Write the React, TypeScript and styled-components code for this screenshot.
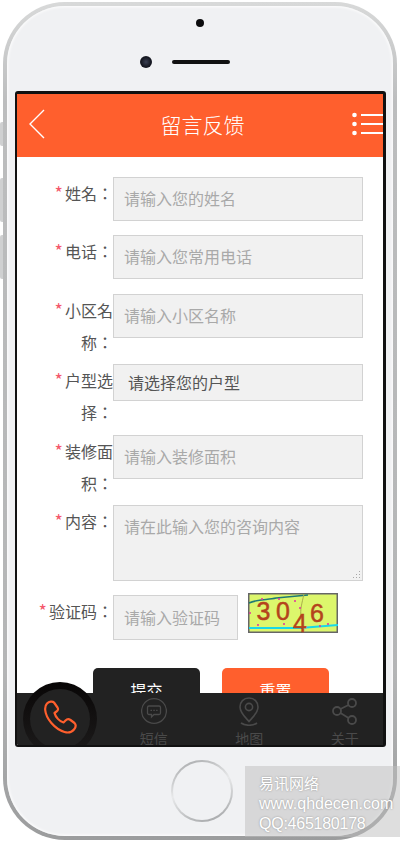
import React from 'react';
import styled, { createGlobalStyle } from 'styled-components';

const FONT = '"Noto Sans CJK SC", "Noto Sans", sans-serif';

const GlobalStyle = createGlobalStyle`
  html, body {
    margin: 0;
    padding: 0;
    background: #fff;
    font-family: ${FONT};
  }
  * {
    box-sizing: border-box;
  }
`;

const Page = styled.div`
  width: 400px;
  height: 844px;
  padding: 2px 3px 4px;
  overflow: hidden;
  position: relative;
`;

const Phone = styled.div`
  position: relative;
  height: 838px;
  border: 4px solid transparent;
  border-radius: 62px;
  background:
    linear-gradient(#f0f1f3, #f0f1f3) padding-box,
    linear-gradient(#d8d9d9, #bcbdbe 12%, #b4b5b6 80%, #9b9c9d) border-box;
  box-shadow: inset 0 0 3px 1px rgba(255, 255, 255, 0.9);
`;

const SideKey = styled.div<{ $top: number; $height: number }>`
  position: absolute;
  left: -7px;
  top: ${p => p.$top}px;
  width: 3px;
  height: ${p => p.$height}px;
  background: #cfd0d1;
  border-radius: 2px 0 0 2px;
`;

const TopBezel = styled.div`
  height: 85px;
  display: flex;
  flex-direction: column;
  align-items: center;
  padding-top: 13px;
`;

const FrontDot = styled.div`
  width: 8px;
  height: 8px;
  border-radius: 50%;
  background: #0b0b0d;
`;

const EarRow = styled.div`
  display: flex;
  align-items: center;
  gap: 20px;
  margin-top: 29px;
  margin-right: 30px;
`;

const Camera = styled.div`
  width: 12px;
  height: 12px;
  border-radius: 50%;
  background: radial-gradient(circle at 50% 50%, #3a3f52 0, #14161f 60%, #2a2c34 100%);
`;

const Speaker = styled.div`
  width: 58px;
  height: 4px;
  border-radius: 2px;
  background: #111;
`;

const Screen = styled.div`
  position: relative;
  width: 371px;
  height: 656px;
  margin-left: 8px;
  background: #fff;
  border-style: solid;
  border-color: #111;
  border-width: 3px 3px 2px 2px;
  border-radius: 3px;
  overflow: hidden;
`;

const Header = styled.header`
  height: 63px;
  background: #ff5f2d;
  display: flex;
  align-items: center;
  justify-content: space-between;
  padding: 0 0 4px 12px;
`;

const Title = styled.h1`
  margin: 0 0 0 8px;
  font-size: 21px;
  font-weight: 300;
  line-height: 30px;
  color: #fff;
`;

const FormBox = styled.form`
  padding-top: 20px;
`;

const Row = styled.div<{ $gap?: number }>`
  display: flex;
  align-items: flex-start;
  margin-bottom: ${p => p.$gap ?? 14}px;
  padding-left: 16px;
`;

/* the TC face centres the full-width colon in its cell */
const Label = styled.label`
  flex: none;
  width: 80px;
  font-family: "Noto Sans CJK TC", sans-serif;
  font-size: 16px;
  line-height: 32px;
  color: #555;
  text-align: right;
`;

const Star = styled.span`
  color: #f4566a;
  font-size: 18px;
  line-height: 16px;
  margin-right: 2px;
`;

const Field = styled.input<{ $short?: boolean }>`
  display: block;
  width: ${p => (p.$short ? 125 : 250)}px;
  height: ${p => (p.$short ? 45 : 44)}px;
  padding: 0 10px 2px;
  background: #f1f1f1;
  border: 1px solid #d2d2d2;
  border-radius: 0;
  outline: none;
  font-family: ${FONT};
  font-size: 16px;
  color: #555;
  &::placeholder {
    color: #a9a9a9;
    opacity: 1;
  }
`;

const Choice = styled.select`
  display: block;
  width: 250px;
  height: 37px;
  padding: 0 14px 2px;
  appearance: none;
  background: #f1f1f1;
  border: 1px solid #d2d2d2;
  border-radius: 0;
  outline: none;
  font-family: ${FONT};
  font-size: 16px;
  color: #555;
`;

const gripDot = 'linear-gradient(#a8a8a8, #a8a8a8)';

const Message = styled.textarea`
  display: block;
  width: 250px;
  height: 76px;
  padding: 8px 10px;
  resize: none;
  border: 1px solid #d2d2d2;
  border-radius: 0;
  outline: none;
  background-color: #f1f1f1;
  background-repeat: no-repeat;
  background-size: 1px 1px;
  background-image: ${gripDot}, ${gripDot}, ${gripDot}, ${gripDot}, ${gripDot}, ${gripDot};
  background-position:
    calc(100% - 2px) calc(100% - 2px),
    calc(100% - 5px) calc(100% - 2px),
    calc(100% - 8px) calc(100% - 2px),
    calc(100% - 2px) calc(100% - 5px),
    calc(100% - 5px) calc(100% - 5px),
    calc(100% - 2px) calc(100% - 8px);
  font-family: ${FONT};
  font-size: 16px;
  line-height: 24px;
  color: #555;
  &::placeholder {
    color: #a9a9a9;
    opacity: 1;
  }
`;

const Captcha = styled.svg`
  flex: none;
  display: block;
  margin: -2px 0 0 10px;
`;

const Actions = styled.div`
  display: flex;
  gap: 22px;
  margin-top: 28px;
  padding-left: 76px;
`;

const Action = styled.button<{ $tone: string }>`
  width: 107px;
  height: 44px;
  border: 0;
  border-radius: 5px;
  background: ${p => p.$tone};
  font-family: ${FONT};
  font-size: 16px;
  color: #fff;
`;

const TabBar = styled.nav`
  position: absolute;
  left: 0;
  right: 0;
  bottom: 0;
  height: 52px;
  background: #222;
  display: grid;
  grid-template-columns: repeat(3, 95.5px);
  padding-left: 89px;
`;

const CallRing = styled.div`
  position: absolute;
  left: 6px;
  top: -11px;
  width: 74px;
  height: 74px;
  border-radius: 50%;
  padding: 7px;
  background: linear-gradient(#080606, #131111 50%, #1d1c1c);
`;

const CallFace = styled.div`
  width: 100%;
  height: 100%;
  border-radius: 50%;
  background: #222;
  display: flex;
  justify-content: center;
  padding: 11px 0 0 1px;
  color: #ff5f2d;
`;

const Tab = styled.a`
  display: flex;
  flex-direction: column;
  align-items: center;
  padding-top: 4px;
  color: #4a4a4a;
  font-size: 14px;
  line-height: 20px;
`;

const TabIcon = styled.svg`
  display: block;
  height: 29px;
  margin-bottom: 2px;
`;

const HomeArea = styled.div`
  display: flex;
  justify-content: center;
  padding: 13px 0 0 4px;
`;

const HomeKey = styled.div`
  width: 62px;
  height: 62px;
  border-radius: 50%;
  background: linear-gradient(160deg, #a0a2a4, #e8e9ea 45%, #9c9ea0);
  padding: 2px;
  &::after {
    content: '';
    display: block;
    width: 100%;
    height: 100%;
    border-radius: 50%;
    background: #f0f1f3;
  }
`;

const Watermark = styled.div`
  position: absolute;
  left: 245px;
  top: 766px;
  width: 155px;
  height: 71px;
  padding: 7px 0 0 14px;
  background: rgba(190, 190, 190, 0.5);
  color: #fff;
  font-family: "Liberation Sans", ${FONT};
  font-size: 16px;
  line-height: 20px;
  text-shadow: 0 0 2px #8f8f8f;
  white-space: nowrap;
`;

const WatermarkName = styled.span`
  font-family: ${FONT};
  font-size: 15px;
`;

const WatermarkQQ = styled.span`
  letter-spacing: -0.25px;
`;

const BackIcon = () => (
  <svg width="16" height="30" viewBox="0 0 16 30" fill="none" stroke="#fff" strokeWidth="1.4">
    <path d="M15 1 L1 15 L15 29" />
  </svg>
);

const MenuIcon = () => (
  <svg width="31" height="24" viewBox="0 0 31 24" fill="#fff">
    <circle cx="2.5" cy="3" r="2.3" />
    <circle cx="2.5" cy="12" r="2.3" />
    <circle cx="2.5" cy="21" r="2.3" />
    <rect x="9" y="2" width="22" height="2" />
    <rect x="9" y="11" width="22" height="2" />
    <rect x="9" y="20" width="22" height="2" />
  </svg>
);

const PhoneIcon = () => (
  <svg width="33" height="34" viewBox="0 0 33 34" fill="none" stroke="currentColor" strokeWidth="2.2" strokeLinejoin="round">
    <path d="M3 3.5 C5 1.5 8.5 1 10 2.5 L13.5 7.5 C14.5 9 14 10.5 12.5 11.5 L10.5 13 C11.5 17 15.5 21.5 19.5 22.5 L21.5 20.5 C23 19 25 19 26.5 20 L30.5 23 C32 24.5 32 27 30 29.5 C27.5 32.5 24 33 20.5 32 C10.5 29 2 18.5 1.2 10 C1 7.5 1.5 5 3 3.5 Z" />
  </svg>
);

const CaptchaImage = () => (
  <Captcha width="90" height="40" viewBox="0 0 90 40">
    <rect x="0.75" y="0.75" width="88.5" height="38.5" fill="#dcf66c" stroke="#666" strokeWidth="1.5" />
    <path d="M1 10 C10 6 20 7 28 5 L60 2" stroke="#1f7a74" strokeWidth="1.5" fill="none" />
    <path d="M56 1 C54 10 52 16 53 24" stroke="#a8b04a" strokeWidth="1" fill="none" />
    <path d="M1 35 L52 35 L90 32" stroke="#19d8e8" strokeWidth="1.8" fill="none" />
    <g fontFamily='"Liberation Sans", sans-serif' fontSize="25" fill="#b4431c" stroke="#b4431c" strokeWidth="0.5">
      <text x="8.5" y="27">3</text>
      <text x="28" y="27">0</text>
      <text x="45" y="38.5">4</text>
      <text x="62" y="29">6</text>
    </g>
    <g fill="#e0329e">
      <circle cx="14" cy="6" r="1" />
      <circle cx="31" cy="6" r="1" />
      <circle cx="47" cy="8" r="1" />
      <circle cx="52" cy="15" r="1" />
      <circle cx="10" cy="32" r="1" />
      <circle cx="36" cy="31" r="1" />
      <circle cx="72" cy="33" r="1" />
      <circle cx="80" cy="31" r="1" />
      <circle cx="2" cy="20" r="1" />
    </g>
  </Captcha>
);

const App: React.FC = () => {
  return (
    <Page>
      <GlobalStyle />
      <Phone>
        <SideKey $top={116} $height={24} />
        <SideKey $top={172} $height={44} />
        <SideKey $top={229} $height={44} />
        <TopBezel>
          <FrontDot />
          <EarRow>
            <Camera />
            <Speaker />
          </EarRow>
        </TopBezel>

        <Screen>
          <Header>
            <BackIcon />
            <Title>留言反馈</Title>
            <MenuIcon />
          </Header>

          <FormBox>
            <Row>
              <Label><Star>*</Star>姓名：</Label>
              <Field placeholder="请输入您的姓名" />
            </Row>
            <Row $gap={15}>
              <Label><Star>*</Star>电话：</Label>
              <Field placeholder="请输入您常用电话" />
            </Row>
            <Row $gap={6}>
              <Label><Star>*</Star>小区名称：</Label>
              <Field placeholder="请输入小区名称" />
            </Row>
            <Row $gap={7}>
              <Label><Star>*</Star>户型选择：</Label>
              <Choice defaultValue="">
                <option value="">请选择您的户型</option>
              </Choice>
            </Row>
            <Row $gap={6}>
              <Label><Star>*</Star>装修面积：</Label>
              <Field placeholder="请输入装修面积" />
            </Row>
            <Row>
              <Label><Star>*</Star>内容：</Label>
              <Message placeholder="请在此输入您的咨询内容" />
            </Row>
            <Row $gap={0}>
              <Label><Star>*</Star>验证码：</Label>
              <Field $short placeholder="请输入验证码" />
              <CaptchaImage />
            </Row>
            <Actions>
              <Action type="button" $tone="#222">提交</Action>
              <Action type="button" $tone="#ff5f2d">重置</Action>
            </Actions>
          </FormBox>

          <TabBar>
            <CallRing>
              <CallFace><PhoneIcon /></CallFace>
            </CallRing>
            <Tab>
              <TabIcon width="26" viewBox="0 0 26 29" fill="none" stroke="currentColor" strokeWidth="1.3">
                <circle cx="13" cy="14" r="12.4" />
                <path d="M8 9 H18 A1.5 1.5 0 0 1 19.5 10.5 V16 A1.5 1.5 0 0 1 18 17.5 H13 L10.5 20 V17.5 H8 A1.5 1.5 0 0 1 6.5 16 V10.5 A1.5 1.5 0 0 1 8 9 Z" />
                <path d="M9.5 13.3 h1.5 M12.3 13.3 h1.5 M15.1 13.3 h1.5" />
              </TabIcon>
              短信
            </Tab>
            <Tab>
              <TabIcon width="22" viewBox="0 0 22 29" fill="none" stroke="currentColor" strokeWidth="1.6">
                <path d="M11 1 C5.5 1 2 5 2 10 C2 16 8 21 11 24.5 C14 21 20 16 20 10 C20 5 16.5 1 11 1 Z" />
                <circle cx="11" cy="10" r="3.6" />
                <path d="M3 26 C7 29 15 29 19 26" />
              </TabIcon>
              地图
            </Tab>
            <Tab>
              <TabIcon width="26" viewBox="0 0 26 29" fill="none" stroke="currentColor" strokeWidth="1.8">
                <circle cx="20" cy="6" r="4" />
                <circle cx="5" cy="14" r="4" />
                <circle cx="20" cy="23" r="4" />
                <path d="M8.5 12 L16.5 8 M8.5 16 L16.5 21" />
              </TabIcon>
              关于
            </Tab>
          </TabBar>
        </Screen>

        <HomeArea>
          <HomeKey />
        </HomeArea>
      </Phone>

      <Watermark>
        <WatermarkName>易讯网络</WatermarkName>
        <br />
        www.qhdecen.com
        <br />
        <WatermarkQQ>QQ:465180178</WatermarkQQ>
      </Watermark>
    </Page>
  );
};

export default App;
